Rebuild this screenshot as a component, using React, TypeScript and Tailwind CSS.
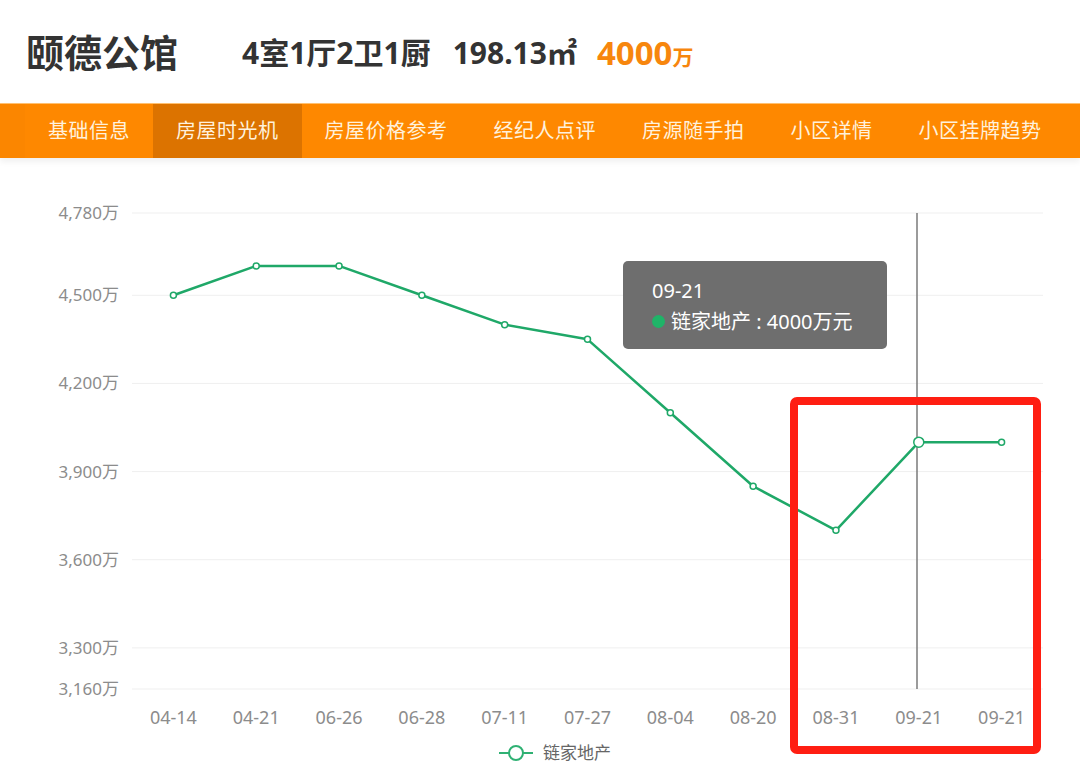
import React from "react";

const FONT = { fontFamily: '"Noto Sans", "Noto Sans CJK SC", sans-serif' };

const tabs = ["基础信息", "房屋时光机", "房屋价格参考", "经纪人点评", "房源随手拍", "小区详情", "小区挂牌趋势"];

const dates = ["04-14", "04-21", "06-26", "06-28", "07-11", "07-27", "08-04", "08-20", "08-31", "09-21", "09-21"];
const prices = [4500, 4600, 4600, 4500, 4400, 4350, 4100, 3850, 3700, 4000, 4000];
const ticks = [4780, 4500, 4200, 3900, 3600, 3300, 3160];

// chart geometry in page coordinates
const left = 132;
const right = 1043;
const step = (right - left) / dates.length;
const yOf = (v: number) => 213 + (4780 - v) * (476 / 1620);
const xOf = (i: number) => left + step * (i + 0.5);

function Chart() {
  const pts = prices.map((p, i) => `${xOf(i)},${yOf(p)}`).join(" ");
  return (
    <svg width={1080} height={626} viewBox="0 158 1080 626" className="block">
      {ticks.map((t) => (
        <g key={t}>
          <line x1={left} x2={right} y1={yOf(t)} y2={yOf(t)} stroke="#efefef" strokeWidth={1} />
          <text x={119} y={yOf(t) + 6} textAnchor="end" fontSize={17} fill="#8c8c8c">
            {t.toLocaleString("en-US")}万
          </text>
        </g>
      ))}
      {dates.map((d, i) => (
        <text key={i} x={xOf(i)} y={724} textAnchor="middle" fontSize={18} fill="#8c8c8c">
          {d}
        </text>
      ))}
      <line x1={917} x2={917} y1={213} y2={689} stroke="#7a7a7a" strokeWidth={1.5} />
      <polyline points={pts} fill="none" stroke="#1fa868" strokeWidth={2.5} strokeLinejoin="round" />
      {prices.map((p, i) => (
        <circle
          key={i}
          cx={xOf(i)}
          cy={yOf(p)}
          r={i === 9 ? 5 : 3}
          fill="#fff"
          stroke="#1fa868"
          strokeWidth={1.5}
        />
      ))}
      {/* legend */}
      <line x1={499} x2={533} y1={753} y2={753} stroke="#2fb173" strokeWidth={2} />
      <circle cx={516} cy={753} r={7} fill="#fff" stroke="#2fb173" strokeWidth={2} />
      <text x={543} y={759} fontSize={17} fill="#666">链家地产</text>
    </svg>
  );
}

export default function App() {
  return (
    <div className="w-[1080px] h-[784px] bg-white overflow-hidden text-[#333]" style={FONT}>
      <div className="h-[103px] flex items-center pl-[26px] pt-[2px]">
        <span className="text-[38px] font-bold text-[#333]">颐德公馆</span>
        <span className="ml-[64px] text-[30px] font-bold text-[#333]">4室1厅2卫1厨</span>
        <span className="ml-[22px] text-[30px] font-bold text-[#333]">198.13㎡</span>
        <span className="ml-[20px] font-bold text-[#f7860d]">
          <span className="text-[33px]">4000</span>
          <span className="text-[21px]">万</span>
        </span>
      </div>
      <div className="h-[55px] bg-[#fe8800] border-t border-[#ffc070] flex shadow-[0_4px_6px_rgba(0,0,0,0.06)]">
        <div className="w-[25px] bg-[#fb8600]" />
        {tabs.map((t, i) => (
          <div
            key={t}
            className={
              i === 1
                ? "px-[23px] flex items-center text-[20px] tracking-[0.5px] text-[#fff1dc] bg-[#dc7300]"
                : "px-[23px] flex items-center text-[20px] tracking-[0.5px] text-[#fff1dc]"
            }
          >
            {t}
          </div>
        ))}
      </div>
      <div className="relative">
        <Chart />
        <div className="absolute left-[623px] top-[103px] w-[264px] h-[88px] rounded-[5px] bg-[#6e6e6e] pl-[29px] pt-[14px] text-white text-[20px] leading-[31px]">
          <div>09-21</div>
          <div className="flex items-center">
            <span className="w-[13px] h-[13px] rounded-full bg-[#1fb468] mr-[6px]" />
            <span>链家地产 : 4000万元</span>
          </div>
        </div>
        <div className="absolute left-[790px] top-[239px] w-[251px] h-[357px] border-[8px] border-[#ff1e12] rounded-[7px]" />
      </div>
    </div>
  );
}
